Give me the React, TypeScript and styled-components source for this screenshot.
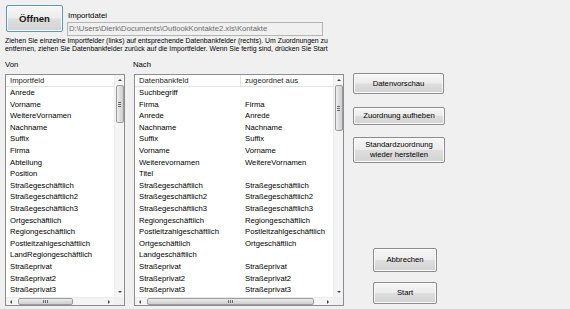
import React from 'react';
import styled, { createGlobalStyle } from 'styled-components';

const GlobalStyle = createGlobalStyle`
  html, body {
    margin: 0;
    padding: 0;
    background: #f0f0f0;
  }
  body {
    font-family: 'Liberation Sans', Arial, sans-serif;
  }
`;

const Window = styled.div`
  width: 570px;
  height: 309px;
  overflow: hidden;
  box-sizing: border-box;
  padding: 5px 0 0 5px;
  display: flex;
  flex-direction: column;
  color: #000;
`;

const TopRow = styled.div`
  display: flex;
  height: 31px;
  padding-left: 1px;
`;

const WinButton = styled.button<{ $w: number; $h: number; $focus?: boolean }>`
  width: ${(p) => p.$w}px;
  height: ${(p) => p.$h}px;
  box-sizing: border-box;
  padding: 0;
  font-family: 'Liberation Sans', Arial, sans-serif;
  font-size: 7.7px;
  line-height: 10px;
  color: #000;
  border: 1px solid ${(p) => (p.$focus ? '#4f9cc8' : '#8c8c8c')};
  border-radius: 2px;
  background: linear-gradient(#f6f6f6 0%, #ececec 48%, #dedede 52%, #d2d2d2 100%);
  box-shadow: inset 0 0 0 1px #fbfbfb;
  text-align: center;
  cursor: default;
`;

const OpenButton = styled(WinButton)`
  font-size: 9.6px;
  font-weight: bold;
  color: #1a1a1a;
`;

const FieldGroup = styled.div`
  display: flex;
  flex-direction: column;
  margin: 6px 0 0 4px;
`;

const FieldLabel = styled.div`
  font-size: 7.8px;
  line-height: 10px;
  height: 10px;
  padding-left: 1px;
  margin-bottom: 1px;
`;

const PathBox = styled.div`
  width: 256px;
  height: 14px;
  box-sizing: border-box;
  border: 1px solid #b4b4b4;
  background: #f0f0f0;
  color: #6d6d6d;
  font-size: 7.7px;
  line-height: 12px;
  padding-left: 1px;
  white-space: nowrap;
  overflow: hidden;
`;

const Hint = styled.p`
  margin: 1px 0 0 0;
  width: 340px;
  font-size: 6.9px;
  line-height: 8px;
`;

const Captions = styled.div`
  display: flex;
  margin-top: 7px;
  height: 10px;
  font-size: 7.7px;
  line-height: 10px;
`;

const Caption = styled.div<{ $w: number }>`
  width: ${(p) => p.$w}px;
`;

const MainRow = styled.div`
  display: flex;
  margin-top: 4px;
  height: 232px;
`;

const ListBox = styled.div<{ $w: number }>`
  width: ${(p) => p.$w}px;
  box-sizing: border-box;
  border: 1px solid #8a8d93;
  background: #fff;
  display: grid;
  grid-template-columns: 1fr 10px;
  grid-template-rows: 1fr 8px;
  overflow: hidden;
  & + & {
    margin-left: 9px;
  }
`;

const ListContent = styled.div`
  overflow: hidden;
  font-size: 7.7px;
`;

const Row = styled.div<{ $cols: number }>`
  display: grid;
  grid-template-columns: ${(p) => (p.$cols === 2 ? '106px 1fr' : '1fr')};
  height: 11.6px;
  line-height: 11.6px;
  white-space: nowrap;
`;

const HeaderRow = styled(Row)`
  height: 11px;
  line-height: 11px;
  border-bottom: 1px solid #e3e3e3;
  color: #1e1e1e;
`;

const Cell = styled.div<{ $divider?: boolean }>`
  padding-left: 4px;
  overflow: hidden;
  border-right: ${(p) => (p.$divider ? '1px solid #e3e3e3' : 'none')};
`;

const VTrack = styled.div`
  display: flex;
  flex-direction: column;
  align-items: center;
  background: #f4f4f4;
  border-left: 1px solid #ececec;
`;

const HTrack = styled.div`
  display: flex;
  align-items: center;
  background: #f4f4f4;
  border-top: 1px solid #ececec;
`;

const Corner = styled.div`
  background: #f0f0f0;
`;

const Arrow = styled.div<{ $dir: 'up' | 'down' | 'left' | 'right' }>`
  width: 0;
  height: 0;
  flex: none;
  ${(p) =>
    p.$dir === 'up'
      ? 'border-left: 2px solid transparent; border-right: 2px solid transparent; border-bottom: 2px solid #444; margin: 4px 0;'
      : p.$dir === 'down'
      ? 'border-left: 2px solid transparent; border-right: 2px solid transparent; border-top: 2px solid #444; margin: 4px 0;'
      : p.$dir === 'left'
      ? 'border-top: 2px solid transparent; border-bottom: 2px solid transparent; border-right: 2px solid #444; margin: 0 4px;'
      : 'border-top: 2px solid transparent; border-bottom: 2px solid transparent; border-left: 2px solid #444; margin: 0 4px;'}
`;

const VThumb = styled.div<{ $top: number; $size: number }>`
  width: 8px;
  height: ${(p) => p.$size}px;
  margin-top: ${(p) => p.$top}px;
  box-sizing: border-box;
  border: 1px solid #9c9c9c;
  border-radius: 2px;
  background: linear-gradient(to right, #efefef, #dcdcdc 50%, #cfcfcf);
  display: flex;
  flex-direction: column;
  align-items: center;
  justify-content: center;
  gap: 1px;
`;

const HThumb = styled.div<{ $left: number; $size: number }>`
  height: 7px;
  width: ${(p) => p.$size}px;
  margin-left: ${(p) => p.$left}px;
  box-sizing: border-box;
  border: 1px solid #9c9c9c;
  border-radius: 2px;
  background: linear-gradient(#efefef, #dcdcdc 50%, #cfcfcf);
  display: flex;
  align-items: center;
  justify-content: center;
  gap: 1px;
`;

const GripV = styled.span`
  width: 3px;
  height: 1px;
  background: #6a6a6a;
`;

const GripH = styled.span`
  width: 1px;
  height: 3px;
  background: #6a6a6a;
`;

const Spacer = styled.div`
  flex: 1;
`;

const ButtonColumn = styled.div`
  display: flex;
  flex-direction: column;
  margin-left: 9px;
  padding-bottom: 2px;
  box-sizing: border-box;
  height: 232px;
`;

const ColButton = styled(WinButton)<{ $gap: number; $indent?: number }>`
  margin-top: ${(p) => p.$gap}px;
  margin-left: ${(p) => p.$indent || 0}px;
`;

type ScrollProps = {
  thumbTop: number;
  thumbSize: number;
  hLeft: number;
  hSize: number;
};

const Scrollbars: React.FC<ScrollProps> = ({ thumbTop, thumbSize, hLeft, hSize }) => (
  <>
    <VTrack>
      <Arrow $dir="up" />
      <VThumb $top={thumbTop} $size={thumbSize}>
        <GripV />
        <GripV />
        <GripV />
      </VThumb>
      <Spacer />
      <Arrow $dir="down" />
    </VTrack>
    <HTrack>
      <Arrow $dir="left" />
      <HThumb $left={hLeft} $size={hSize}>
        <GripH />
        <GripH />
        <GripH />
      </HThumb>
      <Spacer />
      <Arrow $dir="right" />
    </HTrack>
    <Corner />
  </>
);

const importFields = [
  'Anrede',
  'Vorname',
  'WeitereVornamen',
  'Nachname',
  'Suffix',
  'Firma',
  'Abteilung',
  'Position',
  'Straßegeschäftlich',
  'Straßegeschäftlich2',
  'Straßegeschäftlich3',
  'Ortgeschäftlich',
  'Regiongeschäftlich',
  'Postleitzahlgeschäftlich',
  'LandRegiongeschäftlich',
  'Straßeprivat',
  'Straßeprivat2',
  'Straßeprivat3',
];

const mapping: [string, string][] = [
  ['Suchbegriff', ''],
  ['Firma', 'Firma'],
  ['Anrede', 'Anrede'],
  ['Nachname', 'Nachname'],
  ['Suffix', 'Suffix'],
  ['Vorname', 'Vorname'],
  ['Weiterevornamen', 'WeitereVornamen'],
  ['Titel', ''],
  ['Straßegeschäftlich', 'Straßegeschäftlich'],
  ['Straßegeschäftlich2', 'Straßegeschäftlich2'],
  ['Straßegeschäftlich3', 'Straßegeschäftlich3'],
  ['Regiongeschäftlich', 'Regiongeschäftlich'],
  ['Postleitzahlgeschäftlich', 'Postleitzahlgeschäftlich'],
  ['Ortgeschäftlich', 'Ortgeschäftlich'],
  ['Landgeschäftlich', ''],
  ['Straßeprivat', 'Straßeprivat'],
  ['Straßeprivat2', 'Straßeprivat2'],
  ['Straßeprivat3', 'Straßeprivat3'],
];

export default function App() {
  return (
    <>
      <GlobalStyle />
      <Window>
        <TopRow>
          <OpenButton $w={57} $h={27} $focus>
            Öffnen
          </OpenButton>
          <FieldGroup>
            <FieldLabel>Importdatei</FieldLabel>
            <PathBox>D:\Users\Dierk\Documents\OutlookKontakte2.xls\Kontakte</PathBox>
          </FieldGroup>
        </TopRow>
        <Hint>
          Ziehen Sie einzelne Importfelder (links) auf entsprechende Datenbankfelder (rechts). Um Zuordnungen zu
          entfernen, ziehen Sie Datenbankfelder zurück auf die Importfelder. Wenn Sie fertig sind, drücken Sie Start
        </Hint>
        <Captions>
          <Caption $w={128}>Von</Caption>
          <Caption $w={100}>Nach</Caption>
        </Captions>
        <MainRow>
          <ListBox $w={120}>
            <ListContent>
              <HeaderRow $cols={1}>
                <Cell>Importfeld</Cell>
              </HeaderRow>
              {importFields.map((f) => (
                <Row key={f} $cols={1}>
                  <Cell>{f}</Cell>
                </Row>
              ))}
            </ListContent>
            <Scrollbars thumbTop={0} thumbSize={38} hLeft={2} hSize={55} />
          </ListBox>
          <ListBox $w={210}>
            <ListContent>
              <HeaderRow $cols={2}>
                <Cell $divider>Datenbankfeld</Cell>
                <Cell>zugeordnet aus</Cell>
              </HeaderRow>
              {mapping.map(([a, b]) => (
                <Row key={a} $cols={2}>
                  <Cell>{a}</Cell>
                  <Cell>{b}</Cell>
                </Row>
              ))}
            </ListContent>
            <Scrollbars thumbTop={0} thumbSize={46} hLeft={2} hSize={167} />
          </ListBox>
          <ButtonColumn>
            <ColButton $w={91} $h={21} $gap={-1}>
              Datenvorschau
            </ColButton>
            <ColButton $w={92} $h={18} $gap={13}>
              Zuordnung aufheben
            </ColButton>
            <ColButton $w={92} $h={26} $gap={12}>
              Standardzuordnung
              <br />
              wieder herstellen
            </ColButton>
            <Spacer />
            <ColButton $w={64} $h={24} $gap={0} $indent={20}>
              Abbrechen
            </ColButton>
            <ColButton $w={64} $h={22} $gap={10} $indent={20}>
              Start
            </ColButton>
          </ButtonColumn>
        </MainRow>
      </Window>
    </>
  );
}
